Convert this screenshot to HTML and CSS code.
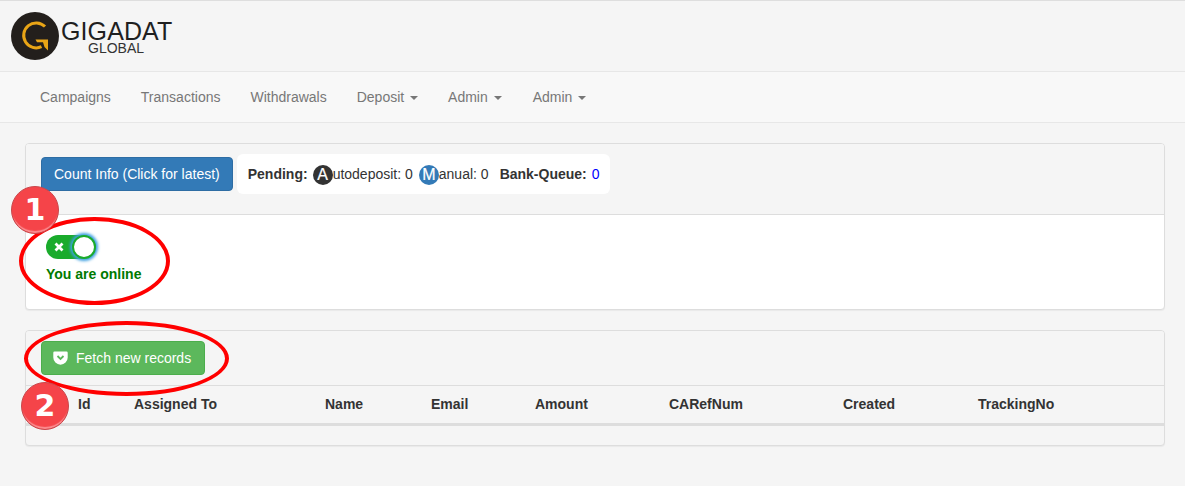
FILE: index.html
```html
<!DOCTYPE html>
<html lang="en">
<head>
<meta charset="utf-8">
<title>Gigadat Global</title>
<link rel="stylesheet" href="styles.css">
</head>
<body>
<header class="brand">
  <svg class="logo-mark" viewBox="0 0 48 48" width="48" height="48" aria-hidden="true">
    <circle cx="24" cy="24" r="24" fill="#231f1c"/>
    <path d="M34 14.500A12.500 12.500 0 1 0 30.500 34.700" fill="none" stroke="#e9a516" stroke-width="3"/>
    <path d="M24.500 27.500H37V38.500l-3.500-3.600-1.500-4.600h-6z" fill="#e9a516"/>
  </svg>
  <div class="logo-text">
    <span class="logo-name">GIGADAT</span>
    <span class="logo-sub">GLOBAL</span>
  </div>
</header>
<nav class="navbar">
  <a class="nav-link">Campaigns</a>
  <a class="nav-link">Transactions</a>
  <a class="nav-link">Withdrawals</a>
  <a class="nav-link">Deposit <i class="caret"></i></a>
  <a class="nav-link">Admin <i class="caret"></i></a>
  <a class="nav-link nav-last">Admin <i class="caret"></i></a>
</nav>
<main class="content">
  <section class="panel panel-status">
    <div class="panel-heading heading-count">
      <button class="btn btn-blue">Count Info (Click for latest)</button>
      <div class="counts">
        <b class="pending">Pending:</b>
        <span class="count-item"><span class="circle circle-dark">A</span>utodeposit: 0</span>
        <span class="count-item"><span class="circle circle-blue">M</span>anual: 0</span>
        <b class="queue">Bank-Queue:</b>
        <span class="queue-value">0</span>
      </div>
    </div>
    <div class="panel-body">
      <div class="toggle">
        <svg class="toggle-x" viewBox="0 0 10 10" width="10" height="10" aria-hidden="true"><path d="M1.500 1.500l7 7M8.500 1.500l-7 7" stroke="#fff" stroke-width="2.800"/></svg>
        <span class="toggle-knob"></span>
      </div>
      <p class="online">You are online</p>
    </div>
    <span class="ring ring-1"></span>
    <span class="badge badge-1">1</span>
  </section>
  <section class="panel panel-records">
    <div class="panel-heading heading-fetch">
      <button class="btn btn-green">
        <svg class="pocket" viewBox="0 0 15 14" width="15" height="14" aria-hidden="true">
          <path d="M1.500 .5h12A1.200 1.200 0 0 1 14.700 1.700V6.500A7.200 7.200 0 0 1 .3 6.500V1.700A1.200 1.200 0 0 1 1.500 .5z" fill="#fff"/>
          <path d="M4.500 5 7.500 7.900l3-2.900" fill="none" stroke="#5cb85c" stroke-width="1.800"/>
        </svg>
        Fetch new records
      </button>
    </div>
    <table class="records">
      <thead>
        <tr><th class="col-blank"></th><th class="col-id">Id</th><th class="col-assigned">Assigned To</th><th class="col-name">Name</th><th class="col-email">Email</th><th class="col-amount">Amount</th><th class="col-ref">CARefNum</th><th class="col-created">Created</th><th>TrackingNo</th></tr>
      </thead>
    </table>
    <span class="ring ring-2"></span>
    <span class="badge badge-2">2</span>
  </section>
</main>
</body>
</html>
```
FILE: styles.css
```css
* { box-sizing: border-box; }
html, body { margin: 0; height: 486px; overflow: hidden; }
body {
  background: #f5f5f5;
  color: #333;
  font-family: "Liberation Sans", Arial, sans-serif;
  font-size: 14px;
  line-height: 20px;
}

.brand {
  display: flex;
  align-items: flex-start;
  height: 72px;
  padding: 12px 0 0 11px;
  border-top: 1px solid #dedede;
  border-bottom: 1px solid #e7e7e7;
}
.logo-mark { flex: none; margin-top: -1px; }
.logo-text { width: 115px; margin-left: 2px; }
.logo-name {
  display: block;
  font-size: 25px;
  line-height: 20px;
  margin-top: 8px;
  letter-spacing: .1px;
  color: #1f1f1f;
}
.logo-sub {
  display: block;
  font-size: 14px;
  line-height: 12px;
  margin: 1px 0 0 27px;
  color: #333;
}

.navbar {
  display: flex;
  height: 51px;
  padding-left: 25px;
  background: #f8f8f8;
  border-bottom: 1px solid #e7e7e7;
}
.nav-link {
  display: block;
  padding: 15px;
  color: #777;
}
.nav-last { margin-left: 1px; }
.caret {
  display: inline-block;
  width: 0;
  height: 0;
  margin-left: 2px;
  vertical-align: middle;
  border-top: 4px solid #777;
  border-left: 4px solid transparent;
  border-right: 4px solid transparent;
}

.content { padding: 20px 20px 0 25px; }
.panel {
  position: relative;
  background: #fff;
  border: 1px solid #ddd;
  border-radius: 4px;
  box-shadow: 0 1px 1px rgba(0,0,0,.05);
}
.panel-status { height: 167px; margin-bottom: 20px; }
.panel-records { height: 116px; background: #f5f5f5; }
.panel-heading {
  display: flex;
  background: #f5f5f5;
  border-bottom: 1px solid #ddd;
  border-radius: 3px 3px 0 0;
}
.heading-count { height: 71px; padding: 10px 0 0 15px; align-items: flex-start; }
.heading-fetch { height: 55px; padding: 10px 15px; }

.btn {
  display: block;
  height: 34px;
  padding: 6px 12px;
  font: inherit;
  color: #fff;
  border: 1px solid;
  border-radius: 4px;
}
.btn-blue { margin-top: 3px; background: #337ab7; border-color: #2e6da4; }
.btn-green { display: flex; align-items: center; background: #5cb85c; border-color: #4cae4c; padding: 6px 13px 6px 11px; }
.pocket { margin-right: 8px; }

.counts {
  display: flex;
  align-items: center;
  height: 40px;
  width: 373px;
  margin-left: 4px;
  padding-left: 11px;
  background: #fff;
  border-radius: 6px;
}
.pending { margin-right: 5px; }
.count-item { margin-right: 6px; }
.queue { margin-left: 5px; margin-right: 5px; }
.queue-value { color: #00f; }
.circle {
  display: inline-block;
  width: 20px;
  height: 20px;
  border-radius: 50%;
  color: #fff;
  font-size: 16px;
  line-height: 20px;
  text-align: center;
  vertical-align: -1px;
  -webkit-text-stroke: .2px #fff;
}
.circle-dark { background: #333; }
.circle-blue { background: #337ab7; }

.panel-body { padding: 20px 20px 0; }
.toggle {
  position: relative;
  display: flex;
  align-items: center;
  width: 50px;
  height: 24px;
  padding-left: 8px;
  border-radius: 12px;
  background: #1aab2c;
}
.toggle-knob {
  position: absolute;
  right: 0;
  top: 0;
  width: 24px;
  height: 24px;
  border-radius: 50%;
  background: #fff;
  border: 2px solid #1aab2c;
  box-shadow: 0 0 3px 2px #3d9fe0;
}
.online {
  margin: 5px 0 0;
  font-weight: 700;
  color: #007a00;
}

.records { width: 100%; border-collapse: collapse; table-layout: fixed; }
.records th {
  height: 38px;
  padding: 8px;
  text-align: left;
  font-weight: 700;
  border-bottom: 3px solid #ddd;
}
.col-blank { width: 44px; }
.col-id { width: 56px; }
.col-assigned { width: 191px; }
.col-name { width: 106px; }
.col-email { width: 104px; }
.col-amount { width: 134px; }
.col-ref { width: 174px; }
.col-created { width: 135px; }

.ring {
  position: absolute;
  border: 4px solid #f00;
  border-radius: 50%;
}
.ring-1 { left: -7px; top: 73px; width: 151px; height: 88px; }
.ring-2 { left: -2px; top: -10px; width: 205px; height: 75px; }
.badge {
  position: absolute;
  width: 48px;
  height: 48px;
  border-radius: 50%;
  background: #f54449;
  border: 1px solid #c9474b;
  box-shadow: inset 0 -3px 1px -1px #fb8f92;
  color: #fff;
  font-family: "DejaVu Sans", sans-serif;
  font-size: 30px;
  font-weight: 700;
  line-height: 46px;
  text-align: center;
}
.badge-1 { left: -15px; top: 42px; }
.badge-2 { left: -5px; top: 51px; }
```
